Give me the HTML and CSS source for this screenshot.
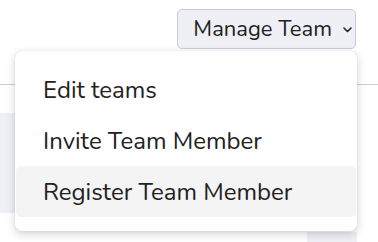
FILE: index.html
```html
<!DOCTYPE html>
<html>
<head>
<meta charset="utf-8">
<link rel="stylesheet" href="styles.css">
</head>
<body>
<header class="topbar">
  <div class="dropdown">
    <button class="toggle">Manage Team <svg class="chev" width="9" height="6" viewBox="0 0 9 6"><path d="M1 1l3.5 3.5L8 1" fill="none" stroke="#222" stroke-width="1.6" stroke-linecap="round" stroke-linejoin="round"/></svg></button>
    <ul class="menu">
      <li class="item">Edit teams</li>
      <li class="item">Invite Team Member</li>
      <li class="item active">Register Team Member</li>
    </ul>
  </div>
</header>
<main class="content">
  <div class="side"></div>
  <div class="spacer"></div>
  <div class="chip"></div>
</main>
</body>
</html>
```
FILE: styles.css
```css
* { box-sizing: border-box; }
html, body { margin: 0; padding: 0; background: #fff; }
body {
  width: 378px; height: 242px; overflow: hidden;
  font-family: "Nunito", "Lato", "Open Sans", sans-serif;
  color: #222;
}
.topbar {
  height: 85px;
  border-bottom: 1px solid #cfcfcf;
  display: flex;
  justify-content: flex-end;
  padding: 9px 22px 0 0;
}
.dropdown { position: relative; }
.toggle {
  width: 179px; height: 40px;
  background: #eef0f5;
  border: 1px solid #c9ccd3;
  border-radius: 5px;
  font-family: inherit;
  font-size: 22px;
  color: #222;
  display: flex; align-items: center; justify-content: flex-end;
  gap: 11px;
  padding: 0 3px 0 0;
}
.chev { margin-top: 2px; }
.menu {
  position: absolute;
  top: 42px; right: -1px;
  width: 342px;
  margin: 0; padding: 13px 1px 14px;
  list-style: none;
  background: #fff;
  border-radius: 7px;
  box-shadow: 0 3px 10px rgba(0,0,0,0.18), 0 0 1px rgba(0,0,0,0.2);
  z-index: 2;
}
.item {
  height: 51px;
  display: flex; align-items: center;
  padding-left: 27px;
  font-size: 24px;
  border-radius: 5px;
}
.item.active { background: #f4f4f4; }
.content { display: flex; padding-top: 28px; }
.side { width: 16px; height: 100px; background: #eef0f5; }
.spacer { flex: 1; }
.chip { width: 50px; height: 20px; margin: 119px 21px 0 0; background: #eef0f5; }
```
